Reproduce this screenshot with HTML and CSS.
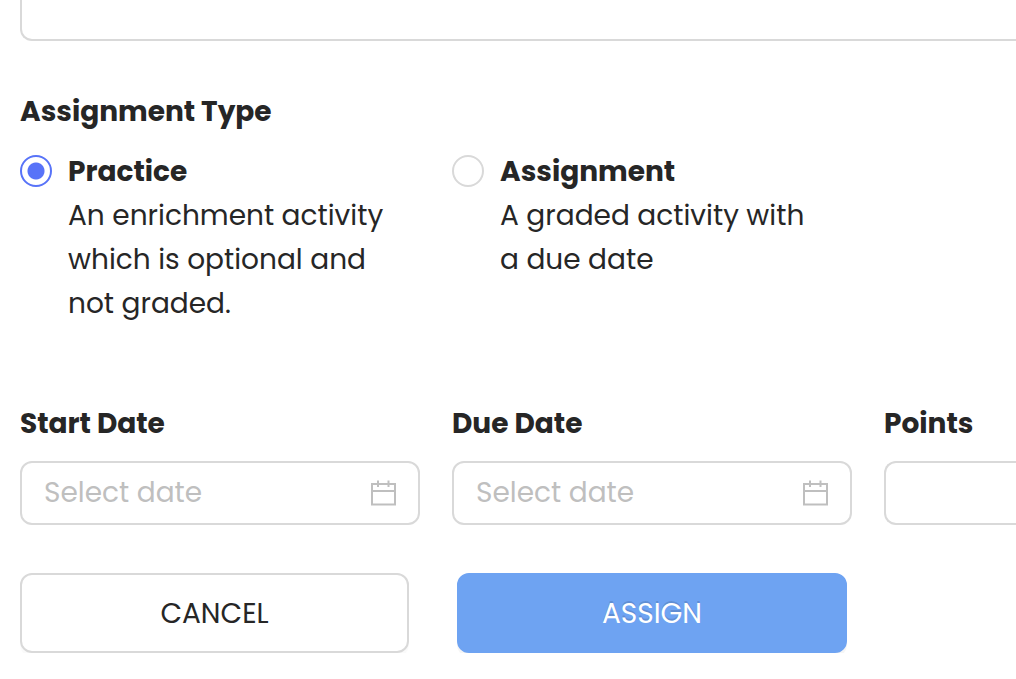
FILE: index.html
```
<!DOCTYPE html>
<html lang="en">
<head>
<meta charset="utf-8">
<title>Assign activity</title>
<link rel="stylesheet" href="styles.css">
</head>
<body>
<form class="form">
  <textarea class="notes" aria-label="Instructions"></textarea>
  <fieldset class="types">
    <legend class="heading">Assignment Type</legend>
    <div class="options">
      <label class="option">
        <input class="radio" type="radio" name="type" checked>
        <span class="option-text"><strong class="option-title">Practice</strong>An enrichment activity<br>which is optional and<br>not graded.</span>
      </label>
      <label class="option">
        <input class="radio" type="radio" name="type">
        <span class="option-text"><strong class="option-title">Assignment</strong>A graded activity with<br>a due date</span>
      </label>
    </div>
  </fieldset>
  <div class="fields">
    <div class="field">
      <label class="heading" for="start">Start Date</label>
      <div class="control">
        <input class="input" id="start" type="text" placeholder="Select date">
        <svg class="calendar" viewBox="0 0 28 28" aria-hidden="true"><path d="M2 5H25V25.5H2ZM2 12H25M8 1.5V8M18.5 1.5V8"/></svg>
      </div>
    </div>
    <div class="field">
      <label class="heading" for="due">Due Date</label>
      <div class="control">
        <input class="input" id="due" type="text" placeholder="Select date">
        <svg class="calendar" viewBox="0 0 28 28" aria-hidden="true"><path d="M2 5H25V25.5H2ZM2 12H25M8 1.5V8M18.5 1.5V8"/></svg>
      </div>
    </div>
    <div class="field">
      <label class="heading" for="points">Points</label>
      <div class="control control-flush"><input class="input" id="points" type="text"></div>
    </div>
  </div>
  <div class="actions">
    <button class="button" type="button">CANCEL</button>
    <button class="button primary" type="submit">ASSIGN</button>
  </div>
</form>
</body>
</html>
```
FILE: styles.css
```
* { box-sizing: border-box; }
body {
  margin: 0;
  background: #fff;
  color: #262626;
  font: 28px/44px Poppins, "Open Sans", sans-serif;
}
.form { padding-left: 20px; }
.notes {
  display: block;
  width: 100%;
  height: 41px;
  border: 2px solid #d9d9d9;
  border-width: 0 0 2px 2px;
  border-radius: 0 0 0 12px;
  resize: none;
}
.types { min-width: 0; margin: 49px 0 0; padding: 0; border: 0; }
.heading { display: block; padding: 0; font-weight: 700; }
.options { display: grid; grid-template-columns: 400px 400px; gap: 32px; padding-top: 16px; }
.option { display: flex; gap: 16px; }
.radio {
  appearance: none;
  flex: none;
  width: 32px;
  height: 32px;
  margin: 5px 0 0;
  border: 2px solid #d9d9d9;
  border-radius: 50%;
}
.radio:checked {
  border-color: #5873f8;
  background: radial-gradient(circle, #5873f8 0 8px, transparent 9px);
}
.option-text { white-space: nowrap; }
.option-title { display: block; font-weight: 700; }
.fields {
  display: grid;
  grid-template-columns: 400px 400px minmax(0, 1fr);
  gap: 32px;
  margin-top: 76px;
}
.control {
  display: flex;
  align-items: center;
  height: 64px;
  margin-top: 15px;
  padding: 0 20px 0 22px;
  border: 2px solid #d9d9d9;
  border-radius: 12px;
}
.control-flush { border-right: 0; border-radius: 12px 0 0 12px; }
.input {
  flex: 1;
  width: 100%;
  min-width: 0;
  padding: 0;
  border: 0;
  outline: 0;
  background: none;
  color: inherit;
  font: inherit;
}
.input::placeholder { color: #bfbfbf; opacity: 1; }
.calendar { flex: none; width: 28px; height: 28px; fill: none; stroke: #bfbfbf; stroke-width: 2; }
.actions { display: flex; gap: 48px; margin-top: 48px; }
.button {
  flex: 0 0 389px;
  height: 80px;
  padding: 2px 0 0;
  border: 2px solid #d9d9d9;
  border-radius: 12px;
  background: #fff;
  box-shadow: 0 4px 0 rgba(0, 0, 0, 0.02);
  color: #262626;
  font: inherit;
}
.primary {
  flex-basis: 390px;
  border-color: #6ea3f2;
  background: #6ea3f2;
  box-shadow: 0 4px 0 rgba(0, 0, 0, 0.04);
  color: #fff;
  text-shadow: 0 -2px 0 rgba(0, 0, 0, 0.12);
}
```
